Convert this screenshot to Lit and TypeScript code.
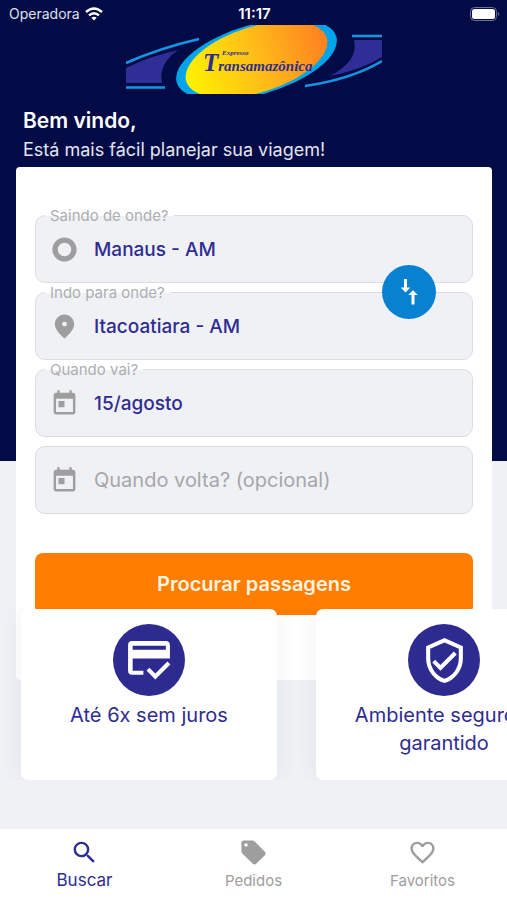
import { LitElement, html, svg, css } from "lit";
import { customElement, state } from "lit/decorators.js";

const icons = {
  origin: svg`<path d="M12 2C6.480 2 2 6.480 2 12s4.480 10 10 10 10-4.480 10-10S17.520 2 12 2zm0 15.600a5.600 5.600 0 1 1 0-11.200 5.600 5.600 0 0 1 0 11.200z"/>`,
  place: svg`<path fill-rule="evenodd" d="M12 2C7.800 2 4 5.220 4 10.200c0 3.320 2.670 7.250 8 11.800 5.330-4.550 8-8.480 8-11.800C20 5.220 16.200 2 12 2zm0 10a2 2 0 1 1 0-4 2 2 0 0 1 0 4z"/>`,
  today: svg`<path d="M19 3h-1V1h-2v2H8V1H6v2H5c-1.110 0-1.990.9-1.990 2L3 19c0 1.100.89 2 2 2h14c1.100 0 2-.9 2-2V5c0-1.100-.9-2-2-2zm0 16H5V8h14v11zM7 10h5v5H7z"/>`,
  search: svg`<path d="M15.500 14h-.79l-.28-.27A6.471 6.471 0 0 0 16 9.500 6.500 6.500 0 1 0 9.500 16c1.610 0 3.090-.59 4.230-1.570l.27.28v.79l5 4.990L20.490 19l-4.990-5zm-6 0C7.010 14 5 11.990 5 9.500S7.010 5 9.500 5 14 7.010 14 9.500 11.990 14 9.500 14z"/>`,
  tag: svg`<path d="M21.410 11.410l-8.830-8.830c-.37-.37-.88-.58-1.410-.58H4c-1.100 0-2 .9-2 2v7.170c0 .53.21 1.040.59 1.410l8.830 8.830c.78.78 2.050.78 2.830 0l7.170-7.170c.78-.78.78-2.040-.01-2.830zM5.800 7.300a1.500 1.500 0 1 1 0-3 1.500 1.500 0 0 1 0 3z"/>`,
  heart: svg`<path d="M16.500 3c-1.740 0-3.410.81-4.500 2.090C10.910 3.810 9.240 3 7.500 3 4.420 3 2 5.420 2 8.500c0 3.780 3.400 6.860 8.550 11.540L12 21.350l1.450-1.320C18.600 15.360 22 12.280 22 8.500 22 5.420 19.580 3 16.500 3zm-4.400 15.550l-.1.1-.1-.1C7.140 14.240 4 11.390 4 8.500 4 6.500 5.500 5 7.500 5c1.540 0 3.040.99 3.570 2.360h1.870C13.460 5.990 14.960 5 16.500 5c2 0 3.500 1.500 3.500 3.500 0 2.890-3.140 5.740-7.900 10.050z"/>`,
  shield: svg`<path d="M12 1L3 5v6c0 5.550 3.840 10.740 9 12 5.160-1.260 9-6.450 9-12V5l-9-4zm7 10c0 4.520-2.980 8.690-7 9.930-4.020-1.240-7-5.410-7-9.930V6.300l7-3.110 7 3.110V11zm-11.590.59L6 13l4 4 8-8-1.410-1.420L10 14.170z"/>`,
  card: svg`<g transform="scale(.5)"><path fill-rule="evenodd" d="M7 5h33a4 4 0 0 1 4 4v13H7.500v12H18v4H7a4 4 0 0 1-4-4V9a4 4 0 0 1 4-4zM7.500 9.500v4h32.500v-4z"/><path d="M22.500 32.500l7.200 7.200L43 26.500" fill="none" stroke="currentColor" stroke-width="4"/></g>`,
};

type IconName = keyof typeof icons;

const icon = (name: IconName) =>
  html`<svg class="icon" viewBox="0 0 24 24" fill="currentColor" aria-hidden="true">${icons[name]}</svg>`;

@customElement("trip-logo")
export class TripLogo extends LitElement {
  static styles = css`
    :host { display: block; width: 256px; }
    svg { display: block; width: 100%; }
    .brand { font: italic bold 15px "Liberation Serif", serif; fill: #2e2d8f; }
    .initial { font-size: 25px; }
    .small { font: italic bold 7px "Liberation Serif", serif; fill: #2e2d8f; }
  `;

  render() {
    return html`
      <svg viewBox="0 0 256 69" role="img" aria-label="Expresso Transamazônica">
        <defs>
          <linearGradient id="sun" x1="0" y1="0" x2="1" y2="0">
            <stop offset="0" stop-color="#fff200" />
            <stop offset="0.5" stop-color="#ffbd18" />
            <stop offset="1" stop-color="#ff8021" />
          </linearGradient>
        </defs>
        <g fill="#2f2e96">
          <path d="M0 43Q24 31 52 25Q32 39 36 58H0z" />
          <path d="M228 15h28v17Q235 45 204 51Q233 36 228 15z" />
        </g>
        <g fill="none" stroke="#1496e4" stroke-width="2.600">
          <path d="M0 38Q34 23 73 14M0 62.500H39M226 11H256M179 61Q226 54 256 36" />
        </g>
        <ellipse cx="130.500" cy="34.500" rx="83" ry="35" transform="rotate(-16 130.500 34.500)" fill="#00a4ea" />
        <ellipse cx="130.500" cy="34.500" rx="73.600" ry="33" transform="rotate(-17.300 130.500 34.500)" fill="url(#sun)" />
        <text class="small" x="96" y="30">Expresso</text>
        <text class="brand" x="77" y="46"><tspan class="initial">T</tspan>ransamazônica</text>
      </svg>
    `;
  }
}

@customElement("app-root")
export class AppRoot extends LitElement {
  @state() private from = "Manaus - AM";
  @state() private to = "Itacoatiara - AM";

  static styles = css`
    :host {
      --navy: #020b45;
      --indigo: #2f2c92;
      --surface: #eff1f5;
      --muted: #9e9e9e;
      display: flex;
      flex-direction: column;
      min-height: 100vh;
      overflow: hidden;
      background: var(--surface);
      color: var(--indigo);
      font-family: Inter, "Liberation Sans", sans-serif;
    }
    * { box-sizing: border-box; }
    h1, p, ul { margin: 0; padding: 0; }
    button, input { font: inherit; color: inherit; border: 0; }
    button { cursor: pointer; }
    .icon { display: block; flex: none; width: 29px; height: 29px; }

    .hero { background: var(--navy); color: #fff; padding-bottom: 294px; }
    .status {
      display: grid;
      grid-template-columns: 1fr auto 1fr;
      align-items: center;
      height: 25px;
      padding: 3px 7px 0 9px;
      font-size: 15px;
      line-height: 20px;
    }
    .carrier { display: flex; align-items: center; gap: 5px; color: #dfe1ee; font-size: 14px; }
    .wifi { width: 18px; height: 14px; }
    .clock { font-weight: 600; }
    .battery { justify-self: end; width: 30px; height: 14px; }
    .logo { margin: 0 auto; }
    .greeting { padding: 11px 23px 0; height: 73px; }
    h1 { font-size: 21px; line-height: 32px; font-weight: 600; }
    .greeting p { font-size: 18px; line-height: 26px; color: #e3e5f2; }

    .search {
      display: flex;
      flex-direction: column;
      gap: 9px;
      margin: -294px 15px 0 16px;
      padding: 48px 19px 65px;
      background: #fff;
      border-radius: 4px;
    }
    .route { position: relative; display: grid; gap: 9px; }
    .field {
      position: relative;
      display: flex;
      align-items: center;
      gap: 15px;
      height: 68px;
      padding: 0 14px;
      border: 1px solid #dcdde0;
      border-radius: 10px;
      background: var(--surface);
      color: var(--muted);
    }
    .caption {
      position: absolute;
      left: 9px;
      top: -9px;
      padding: 0 5px;
      font-size: 15px;
      line-height: 18px;
      color: #adaeb1;
      background: linear-gradient(#fff 50%, var(--surface) 50%);
    }
    .field input {
      flex: 1;
      min-width: 0;
      padding: 0;
      background: none;
      outline: none;
      font-size: 19px;
      font-weight: 500;
      color: var(--indigo);
    }
    .field input::placeholder { color: #a6a7aa; opacity: 1; font-size: 20px; font-weight: 400; }
    .swap {
      position: absolute;
      right: 37px;
      top: 50%;
      translate: 0 -50%;
      display: grid;
      place-items: center;
      width: 54px;
      height: 54px;
      margin-top: 4px;
      padding: 0;
      border-radius: 50%;
      background: #0881d1;
      color: #fff;
    }
    .swap svg { width: 28px; height: 28px; }
    .submit {
      height: 62px;
      margin-top: 30px;
      border-radius: 8px;
      background: #ff7d00;
      color: #fff4e2;
      font-size: 20px;
      font-weight: 600;
    }

    .benefits {
      position: relative;
      display: flex;
      gap: 39px;
      margin-top: -71px;
      padding: 0 21px;
      overflow-x: auto;
      scrollbar-width: none;
      list-style: none;
    }
    .benefit {
      display: flex;
      flex: none;
      flex-direction: column;
      align-items: center;
      gap: 5px;
      width: 256px;
      height: 171px;
      padding: 15px 32px 0;
      border-radius: 7px;
      background: #fff;
      box-shadow: 0 0 24px rgb(60 70 90 / 7%);
      font-size: 20px;
      line-height: 28px;
      text-align: center;
    }
    .badge {
      display: grid;
      place-items: center;
      width: 72px;
      height: 72px;
      border-radius: 50%;
      background: #2d2b90;
      color: #fff;
    }
    .badge .icon { width: 49px; height: 49px; }

    nav {
      display: grid;
      grid-template-columns: repeat(3, 1fr);
      height: 71px;
      margin-top: auto;
      background: #fff;
    }
    nav a {
      display: flex;
      flex-direction: column;
      align-items: center;
      gap: 3px;
      padding-top: 9px;
      color: var(--muted);
      font-size: 15px;
      line-height: 22px;
      text-decoration: none;
    }
    nav a[aria-current] { color: var(--indigo); font-size: 17px; gap: 2px; }
  `;

  private swap() {
    [this.from, this.to] = [this.to, this.from];
  }

  private field(id: string, name: IconName, label: string, value: string, placeholder = "") {
    return html`
      <div class="field">
        ${label ? html`<label class="caption" for=${id}>${label}</label>` : ""}
        ${icon(name)}
        <input id=${id} type="text" .value=${value} placeholder=${placeholder} aria-label=${label || placeholder} />
      </div>
    `;
  }

  render() {
    return html`
      <header class="hero">
        <div class="status">
          <span class="carrier">
            Operadora
            <svg class="wifi" viewBox="0 0 18 14" fill="none" stroke="#fff" stroke-width="2.400" aria-hidden="true">
              <path d="M1 5Q9-2 17 5M4 8.400Q9 4 14 8.400" />
              <path d="M9 13.500L6.300 10.800Q9 8.800 11.700 10.800z" fill="#fff" stroke="none" />
            </svg>
          </span>
          <span class="clock">11:17</span>
          <svg class="battery" viewBox="0 0 30 14" aria-hidden="true">
            <rect x="0.500" y="0.500" width="26" height="13" rx="4" fill="none" stroke="#6d7196" />
            <rect x="2" y="2" width="23" height="10" rx="2.500" fill="#fff" />
            <path d="M28 5a2.200 2.200 0 0 1 0 4z" fill="#6d7196" />
          </svg>
        </div>
        <trip-logo class="logo"></trip-logo>
        <div class="greeting">
          <h1>Bem vindo,</h1>
          <p>Está mais fácil planejar sua viagem!</p>
        </div>
      </header>

      <form class="search" @submit=${(e: Event) => e.preventDefault()}>
        <div class="route">
          ${this.field("from", "origin", "Saindo de onde?", this.from)}
          ${this.field("to", "place", "Indo para onde?", this.to)}
          <button class="swap" type="button" aria-label="Inverter origem e destino" @click=${this.swap}>
            <svg viewBox="0 0 28 28" fill="currentColor" aria-hidden="true">
              <path d="M9 1h3v8.500h3.200L10.500 14.500 5.800 9.500H9zM16.500 26.500h3V17h3.200L18 12.200 13.300 17h3.200z" />
            </svg>
          </button>
        </div>
        ${this.field("departure", "today", "Quando vai?", "15/agosto")}
        ${this.field("return", "today", "", "", "Quando volta? (opcional)")}
        <button class="submit" type="submit">Procurar passagens</button>
      </form>

      <ul class="benefits">
        <li class="benefit"><span class="badge">${icon("card")}</span>Até 6x sem juros</li>
        <li class="benefit"><span class="badge">${icon("shield")}</span>Ambiente seguro e garantido</li>
      </ul>

      <nav aria-label="Principal">
        <a href="#buscar" aria-current="page">${icon("search")}Buscar</a>
        <a href="#pedidos">${icon("tag")}Pedidos</a>
        <a href="#favoritos">${icon("heart")}Favoritos</a>
      </nav>
    `;
  }
}
